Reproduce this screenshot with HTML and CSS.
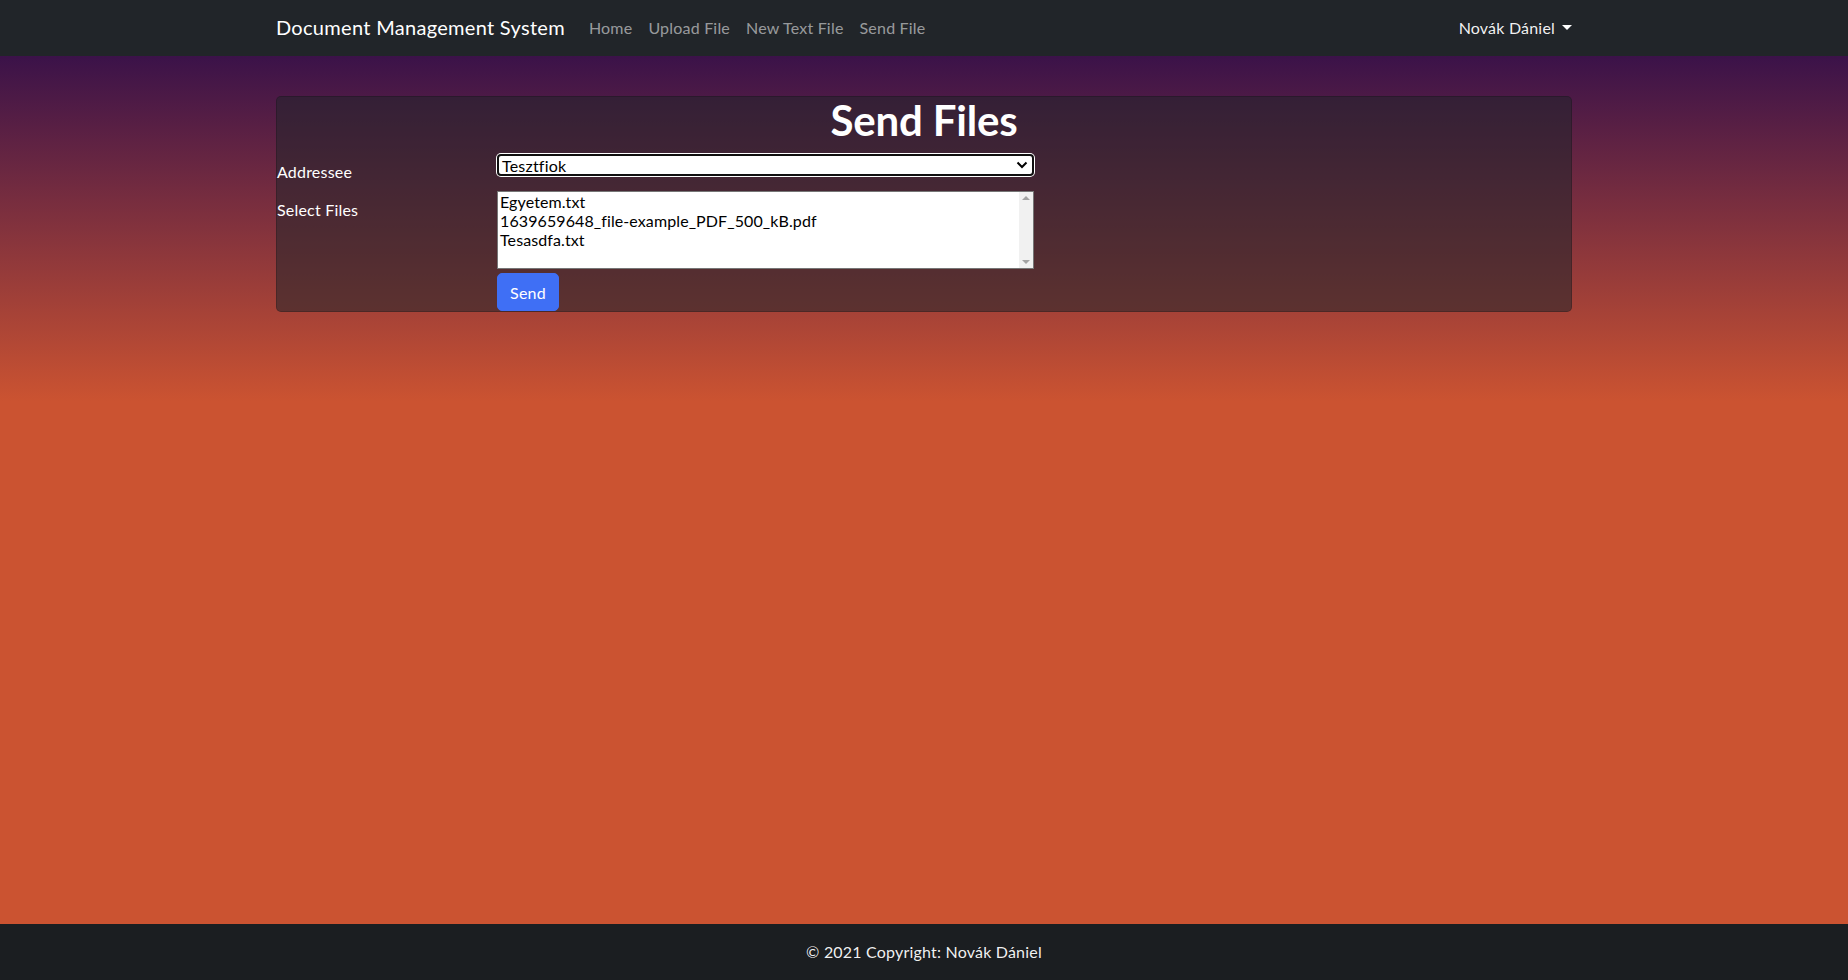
FILE: index.html
```html
<!DOCTYPE html>
<html lang="en">
<head>
<meta charset="utf-8">
<title>Send Files</title>
<link rel="stylesheet" href="styles.css">
</head>
<body>
<div class="page">
  <nav class="navbar">
    <div class="container nav-inner">
      <a class="brand" href="#">Document Management System</a>
      <ul class="nav-links">
        <li><a href="#">Home</a></li>
        <li><a href="#">Upload File</a></li>
        <li><a href="#">New Text File</a></li>
        <li><a href="#">Send File</a></li>
      </ul>
      <div class="user">Novák Dániel<span class="caret"></span></div>
    </div>
  </nav>
  <main class="main">
    <div class="container">
      <div class="card">
        <h1 class="title">Send Files</h1>
        <div class="form-row row-first">
          <label class="label">Addressee</label>
          <div class="field">
            <div class="select">
              <span>Tesztfiok</span>
              <svg class="chev" width="12" height="8" viewBox="0 0 12 8"><path d="M1.5 1.5 L6 6 L10.5 1.5" fill="none" stroke="#000" stroke-width="2"/></svg>
            </div>
          </div>
        </div>
        <div class="form-row">
          <label class="label">Select Files</label>
          <div class="field">
            <div class="multi">
              <div class="options">
                <div class="opt">Egyetem.txt</div>
                <div class="opt">1639659648_file-example_PDF_500_kB.pdf</div>
                <div class="opt">Tesasdfa.txt</div>
              </div>
              <div class="scrollbar">
                <span class="arr up"></span>
                <span class="arr down"></span>
              </div>
            </div>
            <button class="btn">Send</button>
          </div>
        </div>
      </div>
    </div>
  </main>
  <footer class="footer">© 2021 Copyright: Novák Dániel</footer>
</div>
</body>
</html>
```
FILE: styles.css
```css
* { box-sizing: border-box; }
html, body { margin: 0; padding: 0; }
body {
  font-family: Lato, "Open Sans", sans-serif;
  font-size: 16px;
  color: #fff;
  letter-spacing: 0.2px;
}
.page {
  display: flex;
  flex-direction: column;
  height: 980px;
}
.container {
  width: 1296px;
  margin: 0 auto;
}
.navbar {
  background: #212529;
  height: 56px;
  flex: none;
}
.nav-inner {
  display: flex;
  align-items: center;
  height: 56px;
  padding-bottom: 2px;
}
.brand {
  color: #fff;
  text-decoration: none;
  font-size: 20px;
  letter-spacing: 0.3px;
  margin-right: 16px;
  padding-bottom: 1px;
}
.nav-links {
  list-style: none;
  margin: 0;
  padding: 0;
  display: flex;
  flex: 1;
}
.nav-links a {
  display: block;
  padding: 8px 8px;
  color: rgba(255,255,255,.55);
  text-decoration: none;
}
.user {
  color: rgba(255,255,255,.95);
  display: flex;
  align-items: center;
}
.caret {
  display: inline-block;
  margin-left: 7px;
  border-top: 5px solid #fff;
  border-left: 5px solid transparent;
  border-right: 5px solid transparent;
}
.main {
  flex: 1;
  background: linear-gradient(180deg, #3b1249 0px, #cb5331 345px, #cb5331 100%);
  padding-top: 40px;
}
.card {
  background: rgba(33,37,41,.55);
  border: 1px solid rgba(0,0,0,.18);
  border-radius: 5px;
  height: 216px;
}
.title {
  margin: 0;
  text-align: center;
  font-size: 42px;
  letter-spacing: -0.2px;
  font-weight: 700;
  line-height: 46px;
  height: 56px;
}
.form-row {
  display: flex;
}
.row-first { height: 38px; }
.label {
  width: 220px;
  padding-top: 7px;
  line-height: 24px;
}
.field {
  width: 537px;
}
.select {
  margin-top: 1px;
  height: 22px;
  background: #fff;
  border: 2px solid #101010;
  border-radius: 4px;
  box-shadow: 0 0 0 1px #fff;
  color: #000;
  display: flex;
  align-items: center;
  justify-content: space-between;
  padding: 0 4px 0 3px;
  font-size: 16px;
}
.chev { display: block; }
.multi {
  height: 78px;
  background: #fff;
  border: 1px solid #767676;
  display: flex;
  color: #000;
  letter-spacing: 0.1px;
}
.options {
  flex: 1;
  padding: 0 2px;
}
.opt {
  line-height: 19px;
  height: 19px;
}
.scrollbar {
  width: 14px;
  background: #f1f1f1;
  display: flex;
  flex-direction: column;
  justify-content: space-between;
  align-items: center;
  padding: 4px 0;
}
.arr {
  width: 0; height: 0;
  border-left: 4px solid transparent;
  border-right: 4px solid transparent;
}
.arr.up { border-bottom: 4px solid #a3a3a3; }
.arr.down { border-top: 4px solid #a3a3a3; }
.btn {
  margin-top: 4px;
  height: 38px;
  width: 62px;
  background: #3f6ff5;
  border: 1px solid #3f6ff5;
  border-radius: 5px;
  color: #fff;
  font-family: inherit;
  font-size: 16px;
  letter-spacing: 0.2px;
  padding: 0;
}
.footer {
  flex: none;
  height: 56px;
  background: #1b1e21;
  color: rgba(255,255,255,.95);
  text-align: center;
  line-height: 56px;
}
```
